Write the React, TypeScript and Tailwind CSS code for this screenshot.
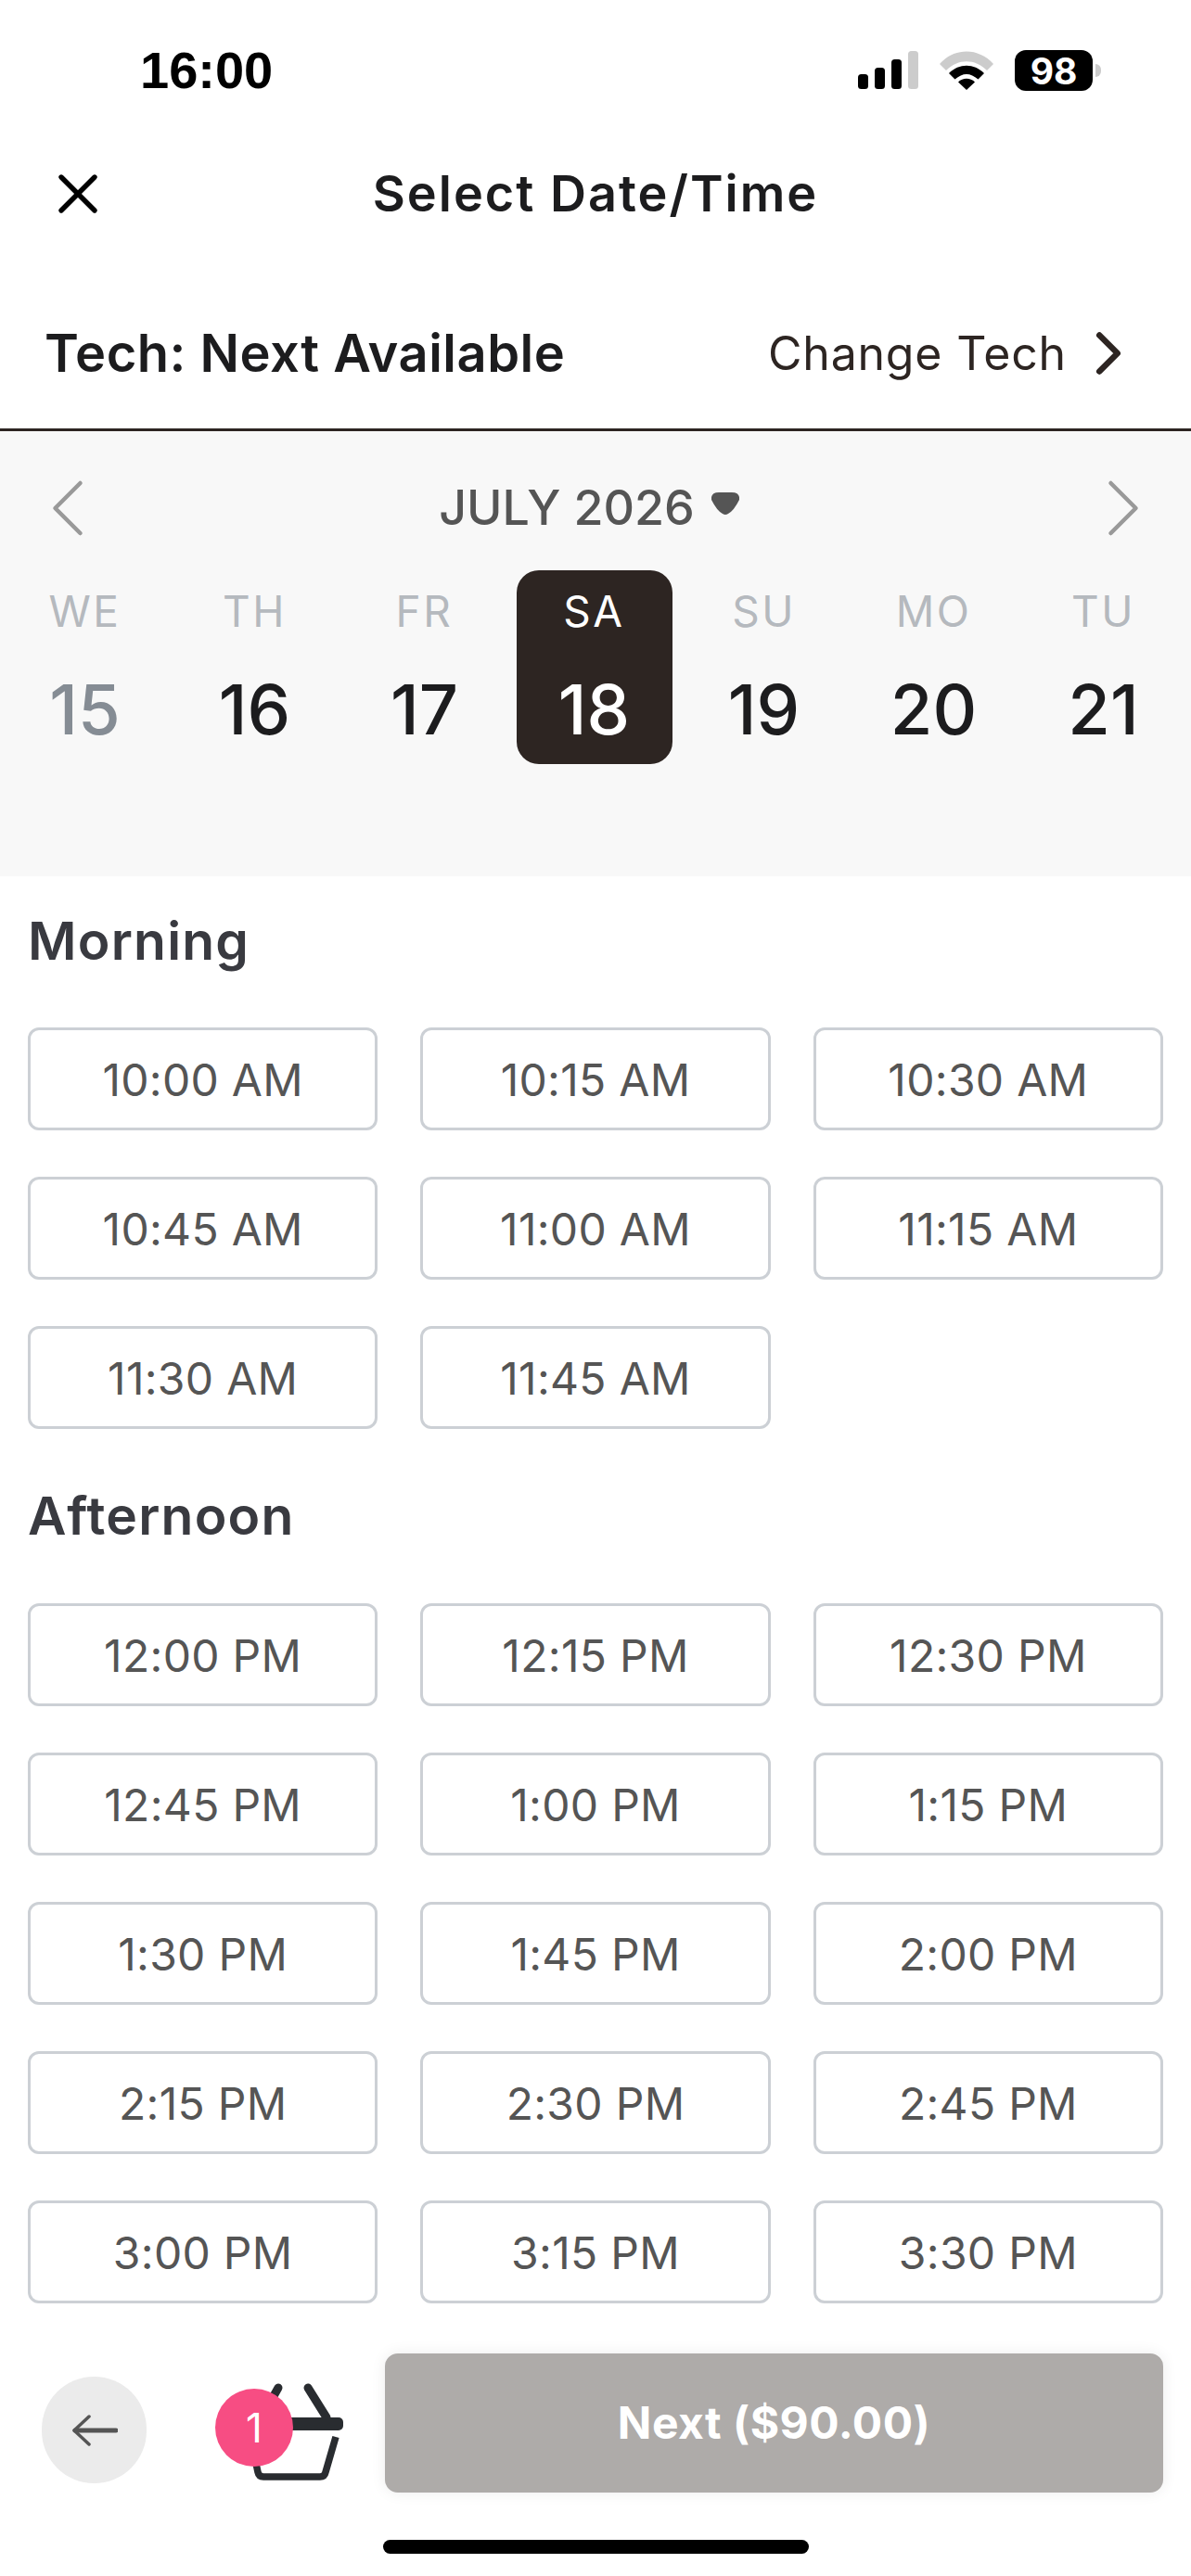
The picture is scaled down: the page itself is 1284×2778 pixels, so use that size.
import { ChevronLeft, ChevronRight, X } from "lucide-react";

const days = [
  { label: "WE", num: "15", past: true },
  { label: "TH", num: "16" },
  { label: "FR", num: "17" },
  { label: "SA", num: "18", selected: true },
  { label: "SU", num: "19" },
  { label: "MO", num: "20" },
  { label: "TU", num: "21" },
];

const morning = ["10:00 AM", "10:15 AM", "10:30 AM", "10:45 AM", "11:00 AM", "11:15 AM", "11:30 AM", "11:45 AM"];
const afternoon = [
  "12:00 PM", "12:15 PM", "12:30 PM", "12:45 PM", "1:00 PM", "1:15 PM", "1:30 PM", "1:45 PM",
  "2:00 PM", "2:15 PM", "2:30 PM", "2:45 PM", "3:00 PM", "3:15 PM", "3:30 PM",
];

const StatusIcons = () => (
  <div className="flex items-center">
    <svg width="65" height="42" viewBox="0 0 65 42">
      <rect x="0" y="25" width="11" height="16" rx="3.5" fill="#000" />
      <rect x="18" y="18" width="11" height="23" rx="3.5" fill="#000" />
      <rect x="36" y="9" width="11" height="32" rx="3.5" fill="#000" />
      <rect x="54" y="0" width="11" height="41" rx="3.5" fill="#ccc" />
    </svg>
    <svg width="58" height="42" viewBox="0 0 58 42" className="ml-[23px]">
      <path d="M0 14 C16 -4 42 -4 58 14 L51 21 C38 8 20 8 7 21 Z" fill="#ccc" />
      <path d="M10 24 C21 13 37 13 48 24 L41.5 30.5 C33 23 25 23 16.5 30.5 Z" fill="#000" />
      <path d="M20 33.5 C25 28.5 33 28.5 38 33.5 L29 42 Z" fill="#000" />
    </svg>
    <div className="ml-[23px] flex h-[44px] w-[84px] items-center justify-center rounded-[12px] bg-black font-['Inter',sans-serif] text-[39px] leading-none font-bold text-white">
      98
    </div>
    <div className="ml-[3px] h-[14px] w-[6px] rounded-r-full bg-[#ccc]" />
  </div>
);

const Slots = ({ items }: { items: string[] }) => (
  <div className="grid grid-cols-3 gap-x-[46px] gap-y-[50px] px-[30px]">
    {items.map((t) => (
      <div
        key={t}
        className="flex h-[111px] items-center justify-center rounded-[12px] border-[3px] border-[#ccd0d5] pt-[2px] text-[48px] tracking-[0.3px] text-[#555555]"
      >
        {t}
      </div>
    ))}
  </div>
);

const App = () => {
  return (
    <div className="h-[2778px] w-[1284px] overflow-hidden bg-white font-['Inter',sans-serif]">
      {/* status bar */}
      <div className="flex h-[152px] items-center justify-between pr-[97px] pl-[151px]">
        <span className="font-['Liberation_Sans',sans-serif] text-[56px] leading-none font-bold text-black">16:00</span>
        <StatusIcons />
      </div>

      {/* header */}
      <div className="grid h-[114px] grid-cols-[1fr_auto_1fr] items-center">
        <div className="pl-[48px]">
          <X size={72} strokeWidth={1.8} className="text-black" />
        </div>
        <h1 className="text-[54px] leading-none font-semibold tracking-[2px] text-[#1c1c1e]">Select Date/Time</h1>
        <div />
      </div>

      {/* tech row */}
      <div className="flex h-[199px] items-center justify-between border-b-[3px] border-[#2d2522] pt-[33px] pr-[50px] pl-[48px]">
        <span className="text-[56px] leading-none font-semibold tracking-[0.5px] text-[#1c1c1e]">Tech: Next Available</span>
        <div className="flex items-center gap-[6px]">
          <span className="text-[50px] leading-none tracking-[0.8px] text-[#2d2522]">Change Tech</span>
          <ChevronRight size={78} strokeWidth={2} className="text-[#2d2522]" />
        </div>
      </div>

      {/* calendar */}
      <div className="h-[480px] bg-[#f8f8f8]">
        <div className="-mb-[16px] flex h-[166px] items-center justify-between px-[19px]">
          <ChevronLeft size={108} strokeWidth={1} className="text-[#999999]" />
          <div className="mr-[14px] flex items-center gap-[18px] text-[#555555]">
            <span className="text-[52px] leading-none font-medium">JULY 2026</span>
            <svg width="30" height="24" viewBox="0 0 30 24" className="-mt-[10px]">
              <path d="M8 0 H22 Q31 0 30 8 Q24 20 18 23 Q15 25 12 23 Q6 20 0 8 Q-1 0 8 0 Z" fill="#555555" />
            </svg>
          </div>
          <ChevronRight size={108} strokeWidth={1} className="text-[#999999]" />
        </div>
        <div className="grid grid-cols-[repeat(7,183px)]">
          {days.map((d) => (
            <div
              key={d.label}
              className={`mx-auto flex h-[209px] w-[168px] flex-col items-center rounded-[24px] pt-[16px] ${
                d.selected ? "bg-[#2d2522]" : ""
              }`}
            >
              <span
                className={`text-[46px] leading-[56px] tracking-[2.5px] ${d.selected ? "text-white" : "text-[#b5b9be]"}`}
              >
                {d.label}
              </span>
              <span
                className={`mt-[33px] text-[74px] leading-[90px] font-medium ${
                  d.selected ? "text-white" : d.past ? "text-[#858c94]" : "text-[#1c1c1e]"
                }`}
              >
                {d.num}
              </span>
            </div>
          ))}
        </div>
      </div>

      {/* morning */}
      <h2 className="mt-[40px] mb-[123px] h-0 pl-[30px] text-[57px] leading-[60px] font-semibold tracking-[1.2px] text-[#393a40]">Morning</h2>
      <Slots items={morning} />

      {/* afternoon */}
      <h2 className="mt-[64px] mb-[124px] h-0 pl-[30px] text-[57px] leading-[60px] font-semibold tracking-[1.2px] text-[#393a40]">Afternoon</h2>
      <Slots items={afternoon} />

      {/* footer */}
      <div className="mt-[54px] flex h-[150px] items-center pr-[30px] pl-[45px]">
        <div className="mb-[10px] flex h-[115px] w-[113px] items-center justify-center self-end rounded-full bg-[#ebebeb]">
          <svg width="50" height="34" viewBox="0 0 50 34">
            <path d="M4 17 H48" stroke="#555555" strokeWidth="5" strokeLinecap="round" fill="none" />
            <path d="M19 2 L3 17 L19 32" stroke="#555555" strokeWidth="3.5" strokeLinecap="round" strokeLinejoin="round" fill="none" />
          </svg>
        </div>
        <div className="relative ml-[74px] h-[126px] w-[143px]">
          <svg width="143" height="126" viewBox="0 0 143 126" className="absolute top-0 left-0">
            <path d="M68 25 L50 57" stroke="#292c30" strokeWidth="9" strokeLinecap="round" fill="none" />
            <path d="M100 25 L120 57" stroke="#292c30" strokeWidth="9" strokeLinecap="round" fill="none" />
            <rect x="30" y="57" width="108" height="14" rx="5" fill="#292c30" />
            <path d="M38 78 L46 116 Q47 121 52 121 H113 Q118 121 119 116 L130 78" stroke="#292c30" strokeWidth="7.5" fill="none" />
          </svg>
          <div className="absolute top-[26px] left-0 flex h-[84px] w-[84px] items-center justify-center rounded-full bg-[#f74d83] text-[44px] leading-none text-white">
            1
          </div>
        </div>
        <div className="ml-[40px] flex h-[150px] flex-1 items-center justify-center rounded-[14px] bg-[#aeaba9] text-[48px] leading-none font-bold tracking-[0.5px] text-white shadow-[0_0_16px_rgba(0,0,0,0.08)]">
          Next ($90.00)
        </div>
      </div>

      {/* home indicator */}
      <div className="mt-[51px] flex justify-center">
        <div className="h-[15px] w-[459px] rounded-full bg-black" />
      </div>
    </div>
  );
};

export default App;
